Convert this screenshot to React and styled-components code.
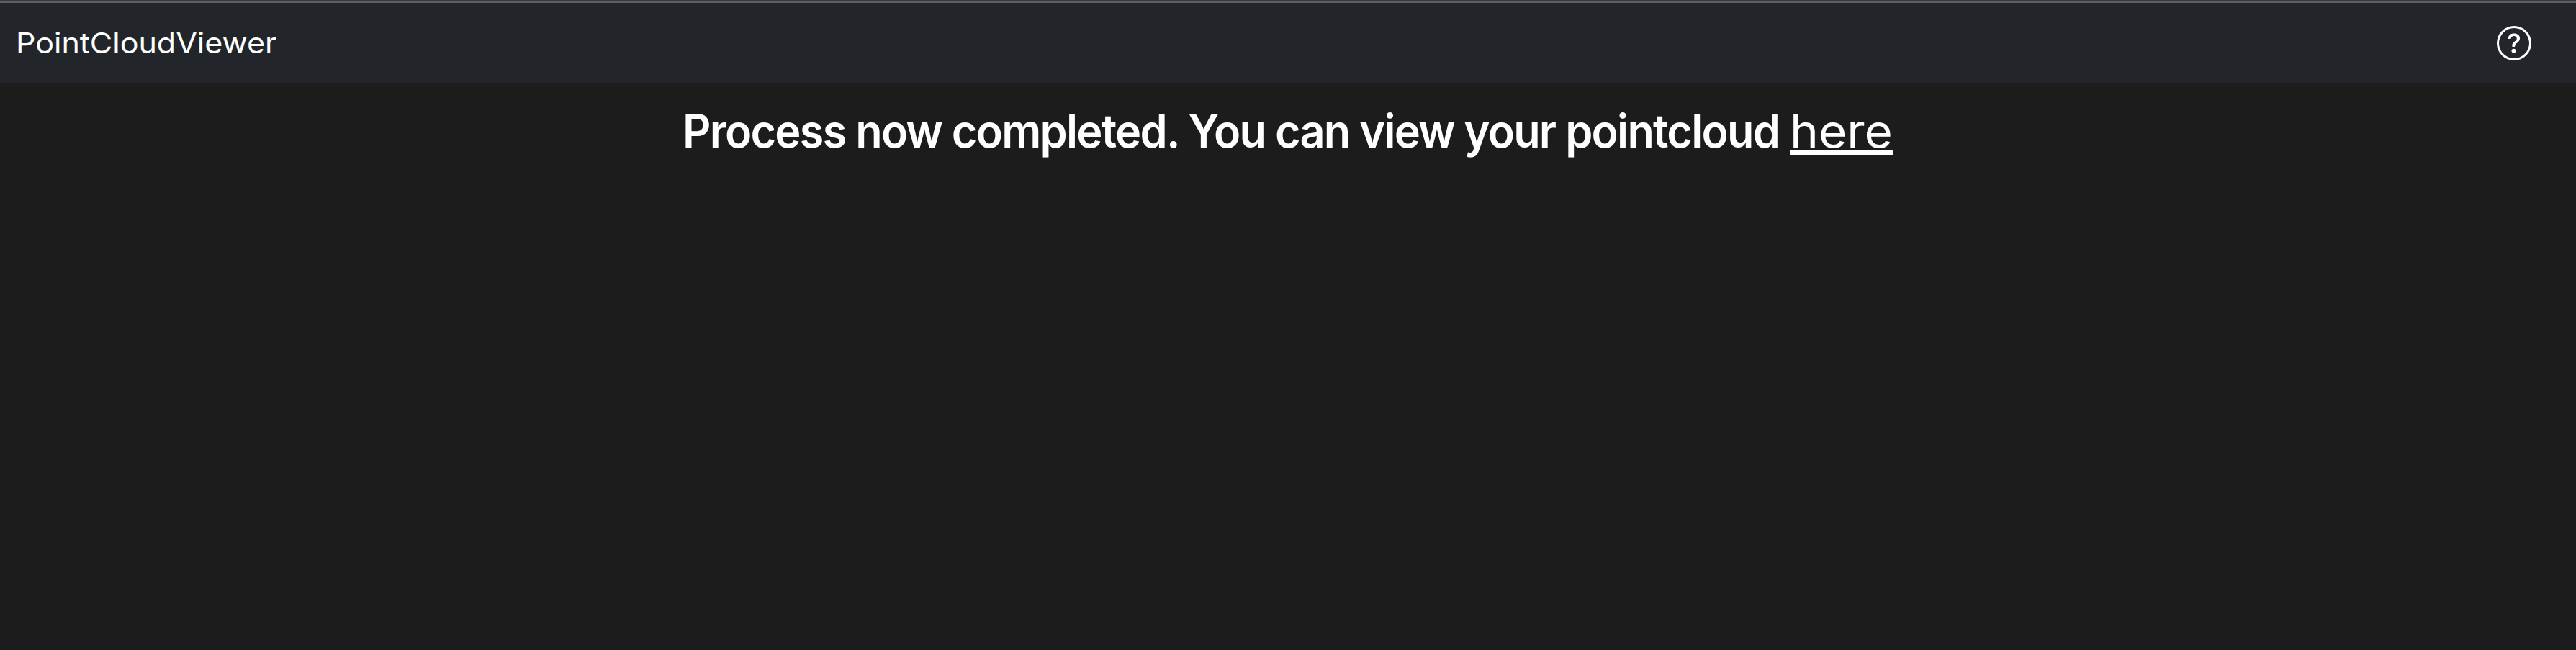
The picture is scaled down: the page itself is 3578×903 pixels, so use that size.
import React from 'react';
import styled, { createGlobalStyle } from 'styled-components';

const GlobalStyle = createGlobalStyle`
  * { box-sizing: border-box; }
  body { margin: 0; background: #1c1c1c; color: #fff; }
`;

const Page = styled.div`
  display: flex;
  flex-direction: column;
  height: 903px;
  overflow: hidden;
`;

const TopEdge = styled.div`
  height: 2px;
  flex: none;
  background: #37383c;
`;

const Navbar = styled.header`
  display: flex;
  align-items: center;
  justify-content: space-between;
  height: 114px;
  flex: none;
  padding: 0 62px 0 22px;
  border-top: 2px solid #5f6063;
  background: #222529;
`;

const Brand = styled.a`
  font: 400 39px/56px Inter, sans-serif;
  color: #fff;
  transform: scaleX(1.102);
  transform-origin: left center;
`;

const HelpIcon = styled.svg`
  width: 48px;
  height: 48px;
  display: block;
`;

const Main = styled.main`
  flex: 1;
  padding-top: 27px;
`;

const Message = styled.h1`
  display: flex;
  justify-content: center;
  margin: 0;
  font: 600 64px/77px Inter, sans-serif;
  white-space: nowrap;
`;

const Lead = styled.span`
  width: 1539px;
  padding-left: 1px;
  letter-spacing: -1.78px;
  transform: scaleX(0.955);
  transform-origin: left center;
`;

const Link = styled.a`
  width: 146px;
  font-weight: 400;
  color: #fff;
  text-decoration: underline;
  text-decoration-thickness: 6px;
  text-underline-offset: 4px;
  text-decoration-skip-ink: none;
  transform: scaleX(1.055);
  transform-origin: left center;
`;

export default function App() {
  return (
    <Page>
      <GlobalStyle />
      <TopEdge />
      <Navbar>
        <Brand>PointCloudViewer</Brand>
        <HelpIcon viewBox="0 0 16 16" fill="#fff" aria-label="Help">
          <path d="M8 15A7 7 0 1 1 8 1a7 7 0 0 1 0 14m0 1A8 8 0 1 0 8 0a8 8 0 0 0 0 16" />
          <path d="M5.255 5.786a.237.237 0 0 0 .241.247h.825c.138 0 .248-.113.266-.25.09-.656.54-1.134 1.342-1.134.686 0 1.314.343 1.314 1.168 0 .635-.374.927-.965 1.371-.673.489-1.206 1.06-1.168 1.987l.003.217a.25.25 0 0 0 .25.246h.811a.25.25 0 0 0 .25-.25v-.105c0-.718.273-.927 1.01-1.486.609-.463 1.244-.977 1.244-2.056 0-1.511-1.276-2.241-2.673-2.241-1.267 0-2.655.59-2.75 2.286m1.557 5.763c0 .533.425.927 1.01.927.609 0 1.028-.394 1.028-.927 0-.552-.42-.94-1.029-.94-.584 0-1.009.388-1.009.94" />
        </HelpIcon>
      </Navbar>
      <Main>
        <Message>
          <Lead>Process now completed. You can view your pointcloud </Lead>
          <Link>here</Link>
        </Message>
      </Main>
    </Page>
  );
}
